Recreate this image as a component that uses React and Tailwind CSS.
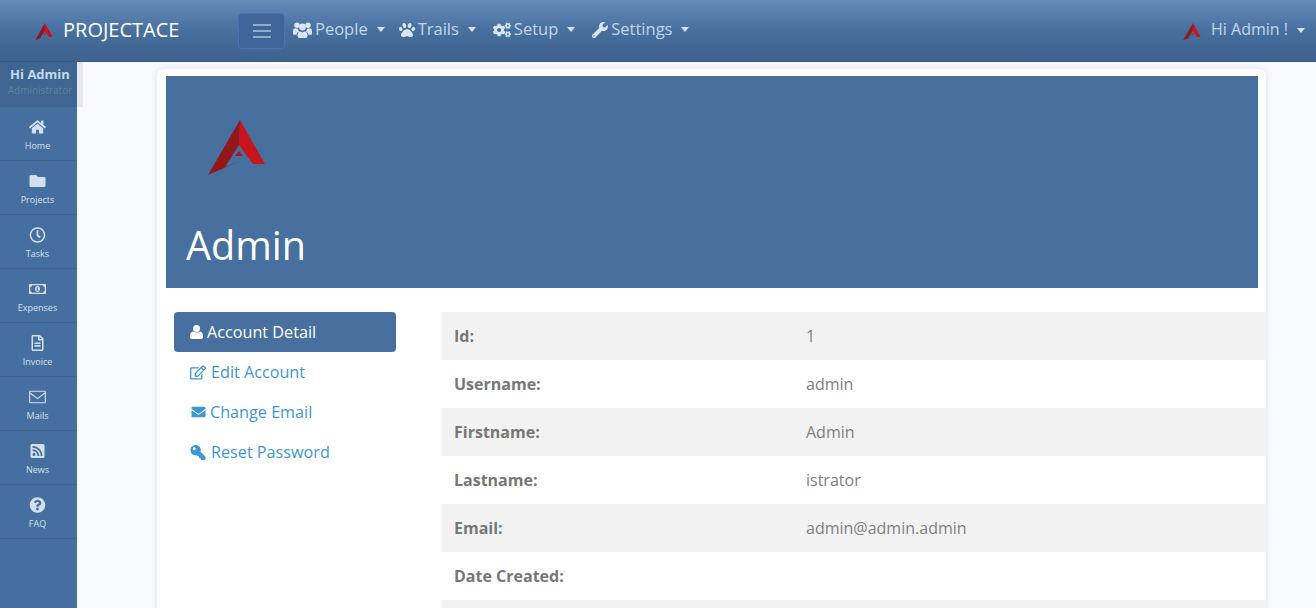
import React from 'react';
import {
  FaPaw, FaCogs, FaWrench, FaHome, FaFolder, FaRegClock, FaRegMoneyBillAlt,
  FaRegFileAlt, FaRssSquare, FaQuestionCircle, FaRegEdit, FaEnvelope, FaKey,
} from 'react-icons/fa';

const font = { fontFamily: '"Open Sans", sans-serif' };

// font-awesome 4 style glyphs that the icon package no longer ships
function UsersIcon({ className }) {
  return (
    <svg viewBox="0 0 19 16" fill="currentColor" className={className}>
      <circle cx="4" cy="3.2" r="2.7" />
      <circle cx="15" cy="3.2" r="2.7" />
      <circle cx="9.5" cy="5" r="3.4" />
      <path d="M0 9q0-2.5 2-2.8l2.6.6q.6 2 2 2.7-2.8.6-3.2 3.2H1q-1 0-1-1z" />
      <path d="M19 9q0-2.5-2-2.8l-2.6.6q-.6 2-2 2.7 2.8.6 3.2 3.2H18q1 0 1-1z" />
      <path d="M4.5 13q.2-3 2.6-3.4 2.4 1.6 4.8 0 2.4.4 2.6 3.4v1q0 2-2 2H6.500q-2 0-2-2z" />
    </svg>
  );
}

function UserIcon({ className }) {
  return (
    <svg viewBox="0 0 13 14" fill="currentColor" className={className}>
      <circle cx="6.500" cy="3.600" r="3.500" />
      <path d="M0 11q0-4 3-4.600 3.500 2.200 7 0 3 .6 3 4.600v1.200q0 1.800-1.800 1.800H1.800Q0 14 0 12.200z" />
    </svg>
  );
}

function ThinEnvelope({ className }) {
  return (
    <svg viewBox="0 0 16 12" fill="none" stroke="currentColor" strokeWidth="1.1" className={className}>
      <rect x="0.6" y="0.6" width="14.800" height="10.800" rx="0.8" />
      <path d="M1 2.200l7 5.300 7-5.300" />
    </svg>
  );
}

const navItems = [
  { label: 'People', icon: UsersIcon, width: 'w-[19px]', after: 'mr-[14px]' },
  { label: 'Trails', icon: FaPaw, width: 'w-[16px]', after: 'mr-[17px]' },
  { label: 'Setup', icon: FaCogs, width: 'w-[18px]', after: 'mr-[17px]' },
  { label: 'Settings', icon: FaWrench, width: 'w-[16px]', after: '' },
];

const sideItems = [
  { label: 'Home', icon: FaHome },
  { label: 'Projects', icon: FaFolder },
  { label: 'Tasks', icon: FaRegClock },
  { label: 'Expenses', icon: FaRegMoneyBillAlt },
  { label: 'Invoice', icon: FaRegFileAlt },
  { label: 'Mails', icon: ThinEnvelope },
  { label: 'News', icon: FaRssSquare },
  { label: 'FAQ', icon: FaQuestionCircle },
];

const tabs = [
  { label: 'Account Detail', icon: UserIcon, iconClass: 'mr-[4px] h-[14px] w-[13px]', active: true },
  { label: 'Edit Account', icon: FaRegEdit, iconClass: 'mr-[5px] h-[15px] w-[16px]' },
  { label: 'Change Email', icon: FaEnvelope, iconClass: 'mr-[3px] h-[14px] w-[17px]' },
  { label: 'Reset Password', icon: FaKey, iconClass: 'mr-[5px] h-[15px] w-[16px] -scale-x-100' },
];

const details = [
  ['Id:', '1'],
  ['Username:', 'admin'],
  ['Firstname:', 'Admin'],
  ['Lastname:', 'istrator'],
  ['Email:', 'admin@admin.admin'],
  ['Date Created:', ''],
  ['', ''],
];

function Logo({ className }) {
  return (
    <svg viewBox="0 0 58 56" className={className}>
      <polygon points="32,0 57,44 45,44 31,25" fill="#c8141c" />
      <polygon points="32,0 31,25 17,47 32,41 0,55" fill="#94151a" />
      <polygon points="31,31 35,36 27,36" fill="#a8161c" />
    </svg>
  );
}

function Caret() {
  return <span className="ml-[9px] inline-block border-x-4 border-t-[5px] border-x-transparent border-t-[#d5e3f5]" />;
}

export default function App() {
  return (
    <div style={font} className="h-[608px] w-[1316px] overflow-hidden bg-[#f7f9ff]">
      <nav className="flex h-[62px] items-center border-b border-[#37597f] bg-gradient-to-b from-[#668ab9] via-[#47709f] via-50% to-[#3d628d]">
        <Logo className="ml-[35px] mt-[3px] h-[18px] w-[18px]" />
        <span className="-mt-0.5 ml-[10px] w-[175px] text-[20px] leading-none text-white">PROJECTACE</span>
        <button className="flex h-[36px] w-[47px] items-center justify-center rounded border border-[#4f6fb0] bg-[#3f6497]">
          <svg viewBox="0 0 18 14" className="h-[14px] w-[18px]" stroke="#a9c4e4" strokeWidth="1.5">
            <path d="M0 1h18M0 7h18M0 13h18" />
          </svg>
        </button>
        <div className="ml-[8px] flex pb-[2px] text-[16.5px] text-[#c3d5ec]">
          {navItems.map(({ label, icon: Icon, width, after }) => (
            <div key={label} className={`flex items-center ${after}`}>
              <Icon className={`mr-[3px] h-[16px] text-[#dbe6f5] ${width}`} />
              <span>{label}</span>
              <Caret />
            </div>
          ))}
        </div>
        <div className="ml-auto mr-[11px] flex items-center text-[16px] text-[#c3d5ec]">
          <Logo className="mr-[10px] mt-[2px] h-[18px] w-[18px]" />
          <span className="pb-[3px]">Hi Admin !</span>
          <Caret />
        </div>
      </nav>

      <div className="flex">
        <aside className="h-[546px] w-[77px] shrink-0 bg-[#456f9e]">
          <div className="h-[45px] w-[83px] border-r-[6px] border-[#e6e8f0] bg-[#3e6690] pl-[3px] pt-[3px] text-center">
            <div className="text-[13px] font-bold leading-[18px] text-[#c5d8f2]">Hi Admin</div>
            <div className="whitespace-nowrap text-[10px] leading-[14px] text-[#62829f]">Administrator</div>
          </div>
          {sideItems.map(({ label, icon: Icon }) => (
            <div key={label} className="flex h-[54px] flex-col items-center border-b border-[#3e6690] pr-[2px] pt-[12px] text-[#d3e0f1]">
              <Icon className="h-[16px] w-[17px]" />
              <span className="mt-[4px] text-[9px] leading-[14px]">{label}</span>
            </div>
          ))}
        </aside>

        <main className="ml-[80px] mt-[7px] w-[1109px] shrink-0 rounded-md bg-white p-[7px] pr-0 shadow-[0_0_5px_rgba(150,160,190,0.25)]">
          <div className="ml-[2px] mr-[8px] h-[212px] bg-[#47709f] px-[20px] pt-[44px]">
            <Logo className="ml-[22px] h-[56px] w-[58px]" />
            <h1 className="mt-[44px] text-[39.500px] font-normal leading-[50px] text-white">Admin</h1>
          </div>

          <div className="mt-[24px] flex">
            <ul className="ml-[10px] w-[222px] shrink-0 text-[16.200px] text-[#3d97d3]">
              {tabs.map(({ label, icon: Icon, iconClass, active }) => (
                <li
                  key={label}
                  className={active
                    ? 'flex h-[40px] items-center rounded bg-[#47709f] px-[16px] text-white'
                    : 'flex h-[40px] items-center px-[16px]'}
                >
                  <Icon className={iconClass} />
                  {label}
                </li>
              ))}
            </ul>
            <table className="ml-[46px] w-[824px] table-fixed text-[16px] text-[#777777]">
              <tbody>
                {details.map(([name, value], i) => (
                  <tr key={i} className={i % 2 === 0 ? 'h-[48px] bg-[#f2f2f2]' : 'h-[48px] bg-white'}>
                    <td className="w-[352px] px-[12px] font-bold">{name}</td>
                    <td className="px-[12px] text-[#808080]">{value}</td>
                  </tr>
                ))}
              </tbody>
            </table>
          </div>
        </main>
      </div>
    </div>
  );
}
